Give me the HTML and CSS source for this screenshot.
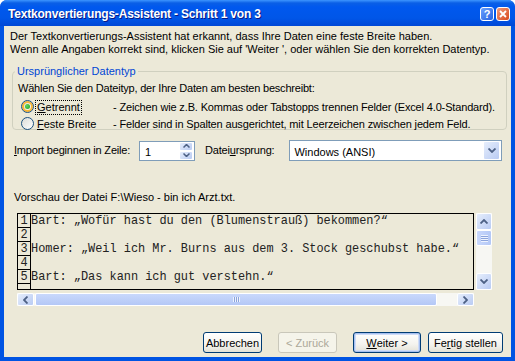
FILE: index.html
```html
<!DOCTYPE html>
<html lang="de">
<head>
  <meta charset="UTF-8">
  <title>Textkonvertierungs-Assistent</title>
  <link rel="stylesheet" href="styles.css">
</head>
<body>
  <div class="window">
    <div class="titlebar">
      <span class="title">Textkonvertierungs-Assistent - Schritt 1 von 3</span>
      <div class="caption-buttons">
        <span class="cap-btn help">?</span>
        <span class="cap-btn close">
          <svg width="8" height="8" viewBox="0 0 8 8"><path d="M1 1 L7 7 M7 1 L1 7" stroke="#fff" stroke-width="1.8"/></svg>
        </span>
      </div>
    </div>

    <div class="content">
      <p class="intro">Der Textkonvertierungs-Assistent hat erkannt, dass Ihre Daten eine feste Breite haben.<br>Wenn alle Angaben korrekt sind, klicken Sie auf 'Weiter ', oder wählen Sie den korrekten Datentyp.</p>

      <fieldset class="group">
        <legend>Ursprünglicher Datentyp</legend>
        <p class="group-hint">Wählen Sie den Dateityp, der Ihre Daten am besten beschreibt:</p>
        <div class="option">
          <span class="radio checked"></span>
          <span class="opt-label"><span class="focus"><u>G</u>etrennt</span></span>
          <span class="opt-desc">- Zeichen wie z.B. Kommas oder Tabstopps trennen Felder (Excel 4.0-Standard).</span>
        </div>
        <div class="option">
          <span class="radio"></span>
          <span class="opt-label"><u>F</u>este Breite</span>
          <span class="opt-desc">- Felder sind in Spalten ausgerichtet, mit Leerzeichen zwischen jedem Feld.</span>
        </div>
      </fieldset>

      <div class="import-row">
        <span class="field-label"><u>I</u>mport beginnen in Zeile:</span>
        <div class="spin">
          <span class="spin-value">1</span>
          <div class="spin-btns">
            <span class="xp-btn"><svg width="7" height="4" viewBox="0 0 7 4"><path d="M0.5 3.5 L3.5 0.5 L6.5 3.5" fill="none" stroke="#4D6185" stroke-width="1.5"/></svg></span>
            <span class="xp-btn"><svg width="7" height="4" viewBox="0 0 7 4"><path d="M0.5 0.5 L3.5 3.5 L6.5 0.5" fill="none" stroke="#4D6185" stroke-width="1.5"/></svg></span>
          </div>
        </div>
        <span class="field-label origin">Datei<u>u</u>rsprung:</span>
        <div class="combo">
          <span class="combo-value">Windows (ANSI)</span>
          <span class="xp-btn drop"><svg width="8" height="5" viewBox="0 0 8 5"><path d="M0.5 0.5 L4 4 L7.5 0.5" fill="none" stroke="#4D6185" stroke-width="1.8"/></svg></span>
        </div>
      </div>

      <p class="preview-label">Vorschau der Datei F:\Wieso - bin ich Arzt.txt.</p>

      <div class="preview">
        <div class="preview-top">
          <div class="grid">
            <div class="row"><span class="num">1</span><span class="line">Bart: „Wofür hast du den (Blumenstrauß) bekommen?“</span></div>
            <div class="row"><span class="num">2</span><span class="line"></span></div>
            <div class="row"><span class="num">3</span><span class="line">Homer: „Weil ich Mr. Burns aus dem 3. Stock geschubst habe.“</span></div>
            <div class="row"><span class="num">4</span><span class="line"></span></div>
            <div class="row"><span class="num">5</span><span class="line">Bart: „Das kann ich gut verstehn.“</span></div>
            <div class="row"><span class="num"></span><span class="line"></span></div>
          </div>
          <div class="vscroll">
            <span class="xp-btn sb-btn"><svg width="8" height="5" viewBox="0 0 8 5"><path d="M0.5 4.5 L4 1 L7.5 4.5" fill="none" stroke="#4D6185" stroke-width="1.8"/></svg></span>
            <span class="thumb vthumb"><span class="grip"></span></span>
            <span class="track"></span>
            <span class="xp-btn sb-btn"><svg width="8" height="5" viewBox="0 0 8 5"><path d="M0.5 0.5 L4 4 L7.5 0.5" fill="none" stroke="#4D6185" stroke-width="1.8"/></svg></span>
          </div>
        </div>
        <div class="hscroll">
          <span class="xp-btn sb-btn"><svg width="5" height="8" viewBox="0 0 5 8"><path d="M4.5 0.5 L1 4 L4.5 7.5" fill="none" stroke="#4D6185" stroke-width="1.8"/></svg></span>
          <span class="thumb hthumb"><span class="grip"></span></span>
          <span class="track"></span>
          <span class="xp-btn sb-btn"><svg width="5" height="8" viewBox="0 0 5 8"><path d="M0.5 0.5 L4 4 L0.5 7.5" fill="none" stroke="#4D6185" stroke-width="1.8"/></svg></span>
        </div>
      </div>

      <div class="buttons">
        <span class="button cancel">Abbrechen</span>
        <span class="button back disabled">&lt; Zurück</span>
        <span class="button next default"><u>W</u>eiter &gt;</span>
        <span class="button finish">Fe<u>r</u>tig stellen</span>
      </div>
    </div>
  </div>
</body>
</html>
```

FILE: styles.css
```css
html, body {
  margin: 0;
  padding: 0;
  background: #fff;
}
body {
  font-family: "Liberation Sans", Arial, sans-serif;
  font-size: 11px;
  color: #000;
}
u {
  text-decoration: underline;
}

/* window frame */
.window {
  width: 515px;
  height: 361px;
  box-sizing: border-box;
  display: flex;
  flex-direction: column;
  background: #0054e3;
  border-radius: 7px 7px 0 0;
  overflow: hidden;
}
.titlebar {
  height: 26px;
  flex: none;
  display: flex;
  align-items: center;
  justify-content: space-between;
  padding: 0 5px 0 8px;
  background: linear-gradient(#3d95ff 0, #0a5fe6 3px, #0058ee 7px, #0056e8 18px, #0048d6 26px);
}
.title {
  color: #fff;
  font-weight: bold;
  font-size: 12px;
  letter-spacing: -0.2px;
  text-shadow: 1px 1px 0 #0a1883;
  margin-top: 1px;
}
.caption-buttons {
  display: flex;
  gap: 2px;
  margin-top: 1px;
}
.cap-btn {
  width: 14px;
  height: 14px;
  box-sizing: border-box;
  border: 1px solid #fff;
  border-radius: 3px;
  display: flex;
  align-items: center;
  justify-content: center;
  color: #fff;
  font-weight: bold;
  font-size: 11px;
}
.help {
  background: linear-gradient(135deg, #6aa0ff, #2663e0);
}
.close {
  background: linear-gradient(135deg, #f09a7a, #d8481c);
}

.content {
  flex: 1;
  margin: 0 4px 4px 4px;
  background: #ece9d8;
  padding: 4px 0 0 6px;
}
.intro {
  margin: 0;
  line-height: 13px;
}

/* group box */
.group {
  margin: 9px 4px 0 2px;
  padding: 4px 0 0 5px;
  border: 1px solid #d0d0bf;
  border-radius: 4px;
  height: 59px;
}
.group legend {
  color: #0046d5;
  padding: 0 2px;
  margin-left: -3px;
  line-height: 13px;
}
.group-hint {
  margin: 0 0 3px 0;
  line-height: 13px;
  letter-spacing: -0.2px;
}
.option {
  display: flex;
  align-items: center;
  height: 17px;
}
.radio {
  width: 13px;
  height: 13px;
  box-sizing: border-box;
  margin-left: 3px;
  border: 1px solid #1c5180;
  border-radius: 50%;
  background: linear-gradient(135deg, #dcdcd7, #fff);
  position: relative;
}
.radio.checked {
  box-shadow: inset 0 0 0 2px #f8b636;
}
.radio.checked::after {
  content: "";
  position: absolute;
  left: 3px;
  top: 3px;
  width: 5px;
  height: 5px;
  border-radius: 50%;
  background: radial-gradient(circle at 35% 35%, #5ed65e, #21a121);
}
.opt-label {
  width: 76px;
  padding-left: 3px;
}
.focus {
  outline: 1px dotted #000;
  outline-offset: 0;
  padding: 0 1px 1px 1px;
  margin-left: -1px;
}
.opt-desc {
  white-space: nowrap;
  letter-spacing: -0.15px;
}

/* import row */
.import-row {
  display: flex;
  align-items: center;
  margin-top: 10px;
  padding-left: 4px;
  height: 21px;
}
.field-label {
  margin-top: -2px;
  letter-spacing: -0.2px;
}
.spin {
  margin-left: 9px;
  width: 56px;
  height: 20px;
  box-sizing: border-box;
  border: 1px solid #7f9db9;
  background: #fff;
  display: flex;
  align-items: center;
  justify-content: space-between;
}
.spin-value {
  padding-left: 5px;
  padding-top: 2px;
}
.spin-btns {
  display: flex;
  flex-direction: column;
  height: 18px;
  margin-right: 1px;
}
.spin-btns .xp-btn {
  width: 14px;
  height: 9px;
}
.xp-btn {
  box-sizing: border-box;
  display: flex;
  align-items: center;
  justify-content: center;
  border: 1px solid #fff;
  border-radius: 2px;
  background: linear-gradient(135deg, #e6eefc, #b9cbf3);
}
.origin {
  margin-left: 10px;
}
.combo {
  margin-left: 15px;
  width: 213px;
  height: 21px;
  box-sizing: border-box;
  border: 1px solid #7f9db9;
  background: #fff;
  display: flex;
  align-items: center;
  justify-content: space-between;
}
.combo-value {
  padding-left: 4px;
  padding-top: 2px;
}
.xp-btn.drop {
  width: 17px;
  height: 19px;
  margin-right: 1px;
}

.preview-label {
  margin: 30px 0 0 4px;
  line-height: 13px;
}

/* preview control */
.preview {
  margin: 9px 0 0 7px;
  width: 475px;
}
.preview-top {
  display: flex;
  gap: 2px;
}
.grid {
  width: 457px;
  height: 77px;
  box-sizing: border-box;
  border: 1px solid #000;
  overflow: hidden;
  font-family: "Liberation Mono", "Courier New", monospace;
  font-size: 11.9px;
  color: #222;
}
.row {
  display: flex;
  height: 14px;
}
.num {
  width: 12px;
  height: 13px;
  flex: none;
  border-right: 1px solid #000;
  border-bottom: 1px solid #000;
  line-height: 14px;
  text-align: center;
}
.line {
  white-space: pre;
  line-height: 14px;
}
.vscroll {
  width: 16px;
  height: 77px;
  display: flex;
  flex-direction: column;
  background: #f7f7f3;
}
.sb-btn {
  width: 16px;
  height: 17px;
  flex: none;
}
.track {
  flex: 1;
}
.thumb {
  box-sizing: border-box;
  border: 1px solid #fff;
  border-radius: 2px;
  background: linear-gradient(90deg, #c9d8fc, #b4c8f6);
  display: flex;
  align-items: center;
  justify-content: center;
}
.vthumb {
  height: 16px;
  flex: none;
}
.vthumb .grip {
  width: 7px;
  height: 7px;
  background: repeating-linear-gradient(#eef3fe 0, #eef3fe 1px, #8ca4dc 1px, #8ca4dc 2px);
}
.hscroll {
  margin-top: 3px;
  width: 457px;
  height: 13px;
  display: flex;
  background: #f7f7f3;
}
.hscroll .sb-btn {
  width: 17px;
  height: 13px;
}
.hthumb {
  width: 402px;
  flex: none;
  margin-left: 1px;
  background: linear-gradient(#c9d8fc, #b4c8f6);
}
.hthumb .grip {
  width: 7px;
  height: 5px;
  background: repeating-linear-gradient(90deg, #eef3fe 0, #eef3fe 1px, #8ca4dc 1px, #8ca4dc 2px);
}

/* bottom buttons */
.buttons {
  display: flex;
  margin: 26px 0 0 193px;
  height: 21px;
}
.button {
  box-sizing: border-box;
  height: 21px;
  display: flex;
  align-items: center;
  justify-content: center;
  border: 1px solid #003c74;
  border-radius: 3px;
  background: linear-gradient(#fff, #f4f3ee 60%, #e3e1d6);
}
.cancel {
  width: 59px;
}
.back {
  width: 59px;
  margin-left: 16px;
}
.next {
  width: 68px;
  margin-left: 16px;
}
.finish {
  width: 75px;
  margin-left: 7px;
}
.disabled {
  border-color: #c9c7ba;
  color: #aca899;
  background: #f5f4ea;
}
.default {
  box-shadow: inset 0 0 0 1px #a6c0f0, inset 0 0 0 2px #cfdcf7;
}
```
